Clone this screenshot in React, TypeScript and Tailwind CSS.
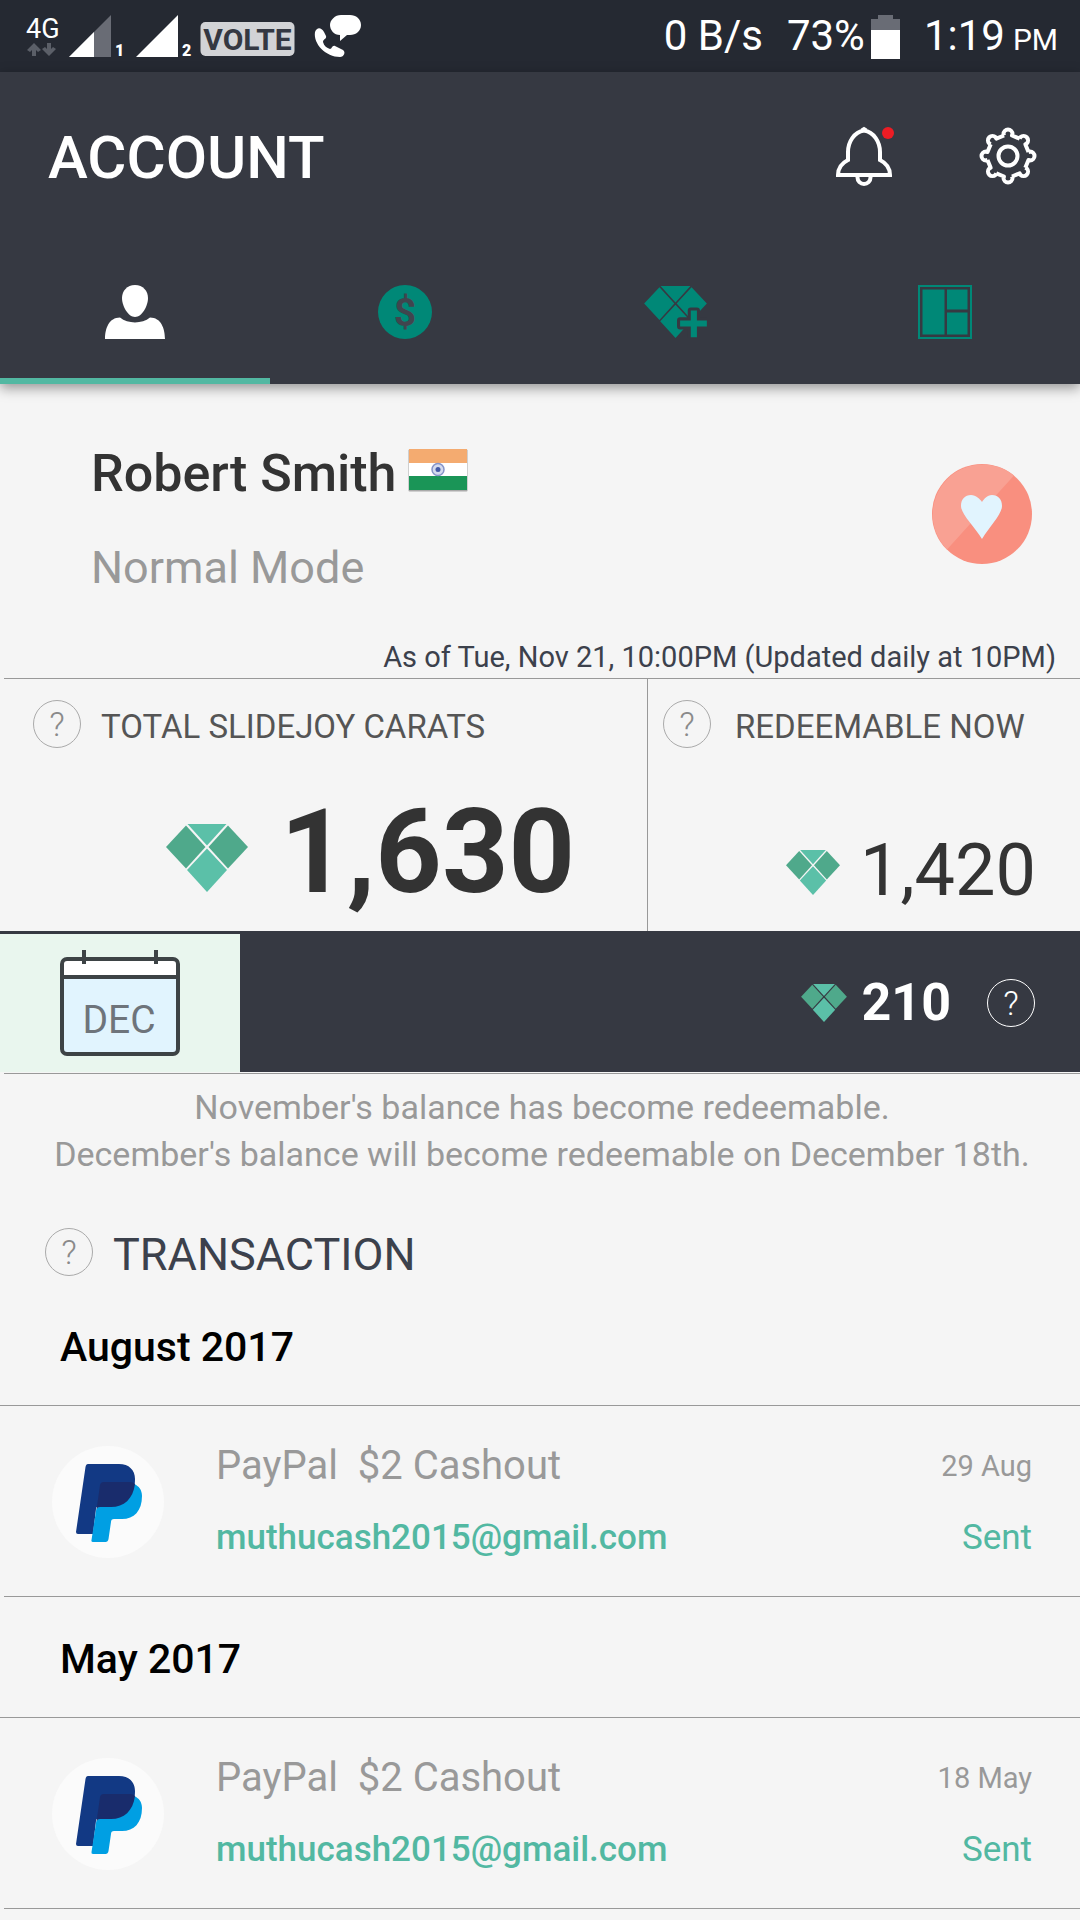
import { ReactNode } from 'react'
import clsx from 'clsx'

type Transaction = {
  month: string
  title: string
  email: string
  date: string
  status: string
}

const transactions: Transaction[] = [
  { month: 'August 2017', title: 'PayPal  $2 Cashout', email: 'muthucash2015@gmail.com', date: '29 Aug', status: 'Sent' },
  { month: 'May 2017', title: 'PayPal  $2 Cashout', email: 'muthucash2015@gmail.com', date: '18 May', status: 'Sent' },
]

const Diamond = ({ className }: { className: string }) => (
  <svg viewBox="0 0 82 68" className={clsx('shrink-0', className)} aria-hidden="true">
    <path d="M21.5 0h39L41 21.5z" fill="#5bc0a8" />
    <path d="M41 24.5L61 46 41 68 21 46z" fill="#5bc0a8" />
    <path d="M20 1.5L39.5 23 20 44.5 0 23z" fill="#4fa98b" />
    <path d="M62 1.5L82 23 62 44.5 42.5 23z" fill="#4fa98b" />
  </svg>
)

const HelpButton = ({ label, light }: { label: string; light?: boolean }) => (
  <button
    aria-label={label}
    className={clsx(
      'flex size-12 shrink-0 items-center justify-center rounded-full border text-[34px] leading-none font-light',
      light ? 'border-white text-white' : 'border-[#aaaaaa] text-[#8a8a8a]'
    )}
  >
    ?
  </button>
)

function StatusBar() {
  return (
    <div className="flex h-18 items-center justify-between bg-[#252932] pr-[22px] pl-6 text-white">
      <svg viewBox="0 0 340 72" className="h-18 w-[340px]" role="img" aria-label="Signal">
        <text x="2" y="38" fontSize="27" fill="#fff">4G</text>
        <path d="M10 43l7 7-3 2-2-2v6H8v-6l-2 2-3-2zM25 56l7-7-3-2-2 2v-6h-4v6l-2-2-3 2z" fill="#5b5f68" />
        <path d="M87 15v42H45z" fill="#696c75" />
        <path d="M70 32v25H45z" fill="#fff" />
        <path d="M154 15v42h-42z" fill="#fff" />
        <text x="91" y="56" fontSize="16" fontWeight="900" fill="#fff">1</text>
        <text x="158" y="56" fontSize="16" fontWeight="900" fill="#fff">2</text>
        <rect x="176.500" y="22" width="94" height="34" rx="5" fill="#d2d3d6" />
        <text x="223.500" y="50" fontSize="30" fontWeight="700" textAnchor="middle" fill="#343842">VOLTE</text>
        <path d="M291 32c2-5 6-5 9 0l2 4c1 3-3 3-3 6 1 4 4 6 7 7 2 0 2-4 5-3l8 4c3 2 1 7-3 7-14 0-27-13-25-25z" fill="#fff" />
        <path d="M317 15h9c6 0 11 4 11 10s-5 10-11 10h-3l-7 6v-6c-6 0-10-5-10-10s5-10 11-10z" fill="#fff" />
      </svg>
      <div className="flex items-baseline pt-0.5 text-[42px] leading-none">
        <span>0 B/s</span>
        <span className="ml-6">73%</span>
        <svg viewBox="0 0 29 44" className="ml-1.5 h-11 w-[29px] self-start" aria-hidden="true">
          <path d="M7 0h15v4h7v11H0V4h7z" fill="#696c75" />
          <path d="M0 15h29v29H0z" fill="#fff" />
        </svg>
        <span className="ml-6">1:19</span>
        <span className="ml-2 text-[30px]">PM</span>
      </div>
    </div>
  )
}

const BellIcon = () => (
  <svg viewBox="0 0 58 60" className="h-15 w-[58px]" fill="none" stroke="#fff" strokeWidth="4">
    <path d="M28 4.500C18 6 12 16 12 26v8C6 37 2 42 2 49h52c0-7-4-12-10-15v-8C44 16 38 6 28 4.500z" />
    <path d="M21.500 50v1.500a6.500 6.500 0 0 0 13 0V50" />
    <path d="M25.500 4l2.500-1.500L30.500 4" strokeWidth="3" />
    <circle cx="52" cy="7" r="6" fill="#ec1c24" stroke="none" />
  </svg>
)

const GearIcon = () => (
  <svg viewBox="-29 -29 58 58" className="size-[58px]" fill="none" stroke="#fff" strokeWidth="4" strokeLinejoin="round">
    <circle r="9.500" />
    {[0, 45, 90, 135, 180, 225, 270, 315].map((angle) => (
      <path key={angle} transform={`rotate(${angle})`} d="M-4-20.500l-.5-1.500a4.500 4.500 0 1 1 9 0l-.5 1.500L11.700-17.300" />
    ))}
  </svg>
)

const tabs: { label: string; icon: ReactNode }[] = [
  {
    label: 'Profile',
    icon: (
      <svg viewBox="0 0 60 54" className="h-[54px] w-[60px]" fill="#fff">
        <path d="M30 0c8 0 13 6 13 13 0 8-6 19-13 19S17 21 17 13C17 6 22 0 30 0z" />
        <path d="M15 32.500c8 6.500 22 6.500 30 0 11 0 15 11 15 21.500H0c0-10.500 4-21.500 15-21.500z" />
      </svg>
    ),
  },
  {
    label: 'Cash',
    icon: (
      <svg viewBox="0 0 54 54" className="size-[54px]">
        <circle cx="27" cy="27" r="27" fill="#008877" />
        <text x="27" y="41" fontSize="39" fontWeight="700" textAnchor="middle" fill="#40454e">$</text>
      </svg>
    ),
  },
  {
    label: 'Earn carats',
    icon: (
      <svg viewBox="0 0 82 68" className="h-[52px] w-[63px]" fill="#008877">
        <path d="M21.500 0h39L41 21.500zM41 24.500L61 46 41 68 21 46zM20 1.500L39.500 23 20 44.500 0 23zM62 1.500L82 23 62 44.500 42.500 23z" />
        <path
          d="M61 32h8v13h13v8H69v14h-8V53H47v-8h14z"
          stroke="#363942"
          strokeWidth="8"
          strokeLinejoin="round"
          paintOrder="stroke"
        />
      </svg>
    ),
  },
  {
    label: 'Board',
    icon: (
      <svg viewBox="0 0 54 54" className="size-[54px]" fill="#008877">
        <path d="M1 1h52v52H1z" fill="none" stroke="#008877" strokeWidth="2" />
        <path d="M4.500 4.500h22v45h-22zM29 4.500h20.500v20H29zM29 27.500h20.500v22H29z" />
      </svg>
    ),
  },
]

function Header() {
  return (
    <header className="relative bg-[#363942] shadow-[0_4px_12px_rgba(0,0,0,0.4)]">
      <div className="flex items-start justify-between pt-10 pr-[43px] pl-12">
        <h1 className="text-[60px] leading-[92px] font-medium text-white">ACCOUNT</h1>
        <div className="flex items-center gap-[85px] pt-3.5">
          <button aria-label="Notifications"><BellIcon /></button>
          <button aria-label="Settings"><GearIcon /></button>
        </div>
      </div>
      <nav className="mt-9 grid grid-cols-4">
        {tabs.map((tab, i) => (
          <button
            key={tab.label}
            aria-label={tab.label}
            className={clsx(
              'flex h-36 items-center justify-center border-b-[6px] pt-1.5',
              i === 0 ? 'border-[#52b8a2]' : 'border-transparent'
            )}
          >
            {tab.icon}
          </button>
        ))}
      </nav>
    </header>
  )
}

const Flag = () => (
  <svg viewBox="0 0 60 44" className="h-11 w-15" role="img" aria-label="India">
    <rect x="0.500" y="1.500" width="59" height="42" rx="1" fill="#aaaaaa" />
    <path d="M1 1h58v14H1z" fill="#f4ab70" />
    <path d="M1 15h58v13H1z" fill="#fff" />
    <path d="M1 28h58v14H1z" fill="#1a9557" />
    <circle cx="30" cy="21.500" r="6" fill="#d3daee" stroke="#8694c8" strokeWidth="1.500" />
    <circle cx="30" cy="21.500" r="2.500" fill="#4459a6" />
  </svg>
)

function Profile() {
  return (
    <section className="pt-15">
      <div className="flex items-start justify-between pr-12 pl-[91px]">
        <div>
          <h2 className="flex items-start gap-3 text-[52px] leading-[60px] font-medium text-[#333333]">
            Robert Smith
            <span className="pt-1"><Flag /></span>
          </h2>
          <p className="mt-9 text-[45px] leading-14 text-[#999999]">Normal Mode</p>
        </div>
        <button aria-label="Favorite" className="mt-5">
          <svg viewBox="0 0 100 100" className="size-[100px]">
            <circle cx="50" cy="50" r="50" fill="#f98f7f" />
            <path d="M82 11.500A50 50 0 0 0 15 85.500z" fill="#f9a193" />
            <path d="M50 75C42 62 29 50 29 42c0-7 4-11 10-11 5 0 9 4 11 7 2-3 5-7 10-7 6 0 10 4 10 11 0 8-12 20-20 33z" fill="#e1f4fe" />
          </svg>
        </button>
      </div>
      <p className="mt-10 pr-6 text-right text-[29px] leading-[42px] text-[#3c414c]">
        As of Tue, Nov 21, 10:00PM (Updated daily at 10PM)
      </p>
    </section>
  )
}

function Balance() {
  return (
    <section>
      <div className="ml-1 grid grid-cols-[644fr_432fr] border-t border-[#999999] text-[#333333]">
        <div className="border-r border-[#999999] pt-[21px] pl-[29px]">
          <div className="flex items-start gap-5 text-[33px] leading-[54px] text-[#555555]">
            <HelpButton label="About total carats" />
            <h3>TOTAL SLIDEJOY CARATS</h3>
          </div>
          <div className="mt-[42px] flex items-baseline justify-end gap-8 pr-[72px] text-[116px] leading-[112px] font-bold">
            <Diamond className="h-[68px] w-[82px]" />
            <span>1,630</span>
          </div>
        </div>
        <div className="pt-[21px] pb-5 pl-[15px]">
          <div className="flex items-start gap-6 text-[33px] leading-[54px] text-[#555555]">
            <HelpButton label="About redeemable carats" />
            <h3>REDEEMABLE NOW</h3>
          </div>
          <div className="mt-[77px] flex items-baseline justify-end gap-5 pr-11 text-[72px] leading-20">
            <Diamond className="h-[45px] w-[54px]" />
            <span>1,420</span>
          </div>
        </div>
      </div>
      <div className="flex items-stretch border-t-[3px] border-[#363942] bg-[#363942]">
        <div className="flex w-60 justify-center bg-[#e9f6ee] pt-4 pb-[15px]">
          <svg viewBox="0 0 120 107" className="h-[107px] w-30" role="img" aria-label="December">
            <rect x="2" y="9" width="116" height="95" rx="5" fill="#e1f4fe" />
            <path d="M2 27V14q0-5 5-5h106q5 0 5 5v13z" fill="#fff" />
            <rect x="2" y="9" width="116" height="95" rx="5" fill="none" stroke="#3d4345" strokeWidth="4" />
            <path d="M2 27h116M24 0v14M96 0v14" stroke="#3d4345" strokeWidth="4" />
            <text x="59" y="83" fontSize="39" textAnchor="middle" fill="#6e747b">DEC</text>
          </svg>
        </div>
        <div className="flex flex-1 items-center justify-end pr-[45px] text-white">
          <Diamond className="h-[38px] w-[46px]" />
          <span className="ml-3.5 text-[52px] leading-none font-bold">210</span>
          <span className="ml-9 flex"><HelpButton label="About pending carats" light /></span>
        </div>
      </div>
      <p className="mt-px ml-1 border-t border-[#999999] pt-2.5 text-center text-[34px] leading-[47px] text-[#999999]">
        November's balance has become redeemable.
        <br />
        December's balance will become redeemable on December 18th.
      </p>
    </section>
  )
}

const PayPalLogo = () => (
  <svg viewBox="0 0 112 112" className="size-28 shrink-0" role="img" aria-label="PayPal">
    <circle cx="56" cy="56" r="56" fill="#fbfbfb" />
    <path d="M36 18h31c10 0 16 6 16 15 0 17-9 28-25 28H45q-1 0-1 2l-3 25H26q-2 0-2-2l9.500-65q.5-3 2.500-3z" fill="#123984" />
    <path d="M49 38h33c5 2 8 6 8 12 0 15-8 23-20 23h-8q-3 0-3 3l-2.500 17q-.5 3-3 3H41q-2 0-1.500-2L44 65q.5-4 3-4z" fill="#009fe3" />
    <path d="M48 39q.5-3 4-3h26q3 0 5 2c-2 15-11 23-24 23H48q-3 0-3.500 3z" fill="#192c6c" />
  </svg>
)

const TransactionItem = ({ item }: { item: Transaction }) => (
  <li>
    <h3 className="border-b border-[#999999] pt-10 pb-9 pl-15 text-[41px] leading-11 font-medium text-black">
      {item.month}
    </h3>
    <div className="ml-1 flex items-center border-b border-[#999999] pt-8 pb-[30px] pr-12 pl-12">
      <PayPalLogo />
      <div className="ml-[52px] flex-1">
        <p className="text-[40px] leading-14 whitespace-pre text-[#999999]">{item.title}</p>
        <a href={`mailto:${item.email}`} className="mt-4 block text-[35px] leading-14 font-medium text-[#52b8a2]">
          {item.email}
        </a>
      </div>
      <div className="text-right">
        <p className="text-[29px] leading-14 text-[#999999]">{item.date}</p>
        <p className="mt-4 text-[35px] leading-14 text-[#52b8a2]">{item.status}</p>
      </div>
    </div>
  </li>
)

export default function App() {
  return (
    <div className="min-h-screen bg-[#f5f5f5] font-[Roboto,sans-serif]">
      <StatusBar />
      <Header />
      <main>
        <Profile />
        <Balance />
        <section className="pt-[50px]">
          <div className="flex items-start gap-5 pb-[3px] pl-[45px]">
            <HelpButton label="About transactions" />
            <h2 className="text-[45px] leading-[54px] text-[#3c414c]">TRANSACTION</h2>
          </div>
          <ul>
            {transactions.map((item) => (
              <TransactionItem key={item.month} item={item} />
            ))}
          </ul>
        </section>
      </main>
    </div>
  )
}
